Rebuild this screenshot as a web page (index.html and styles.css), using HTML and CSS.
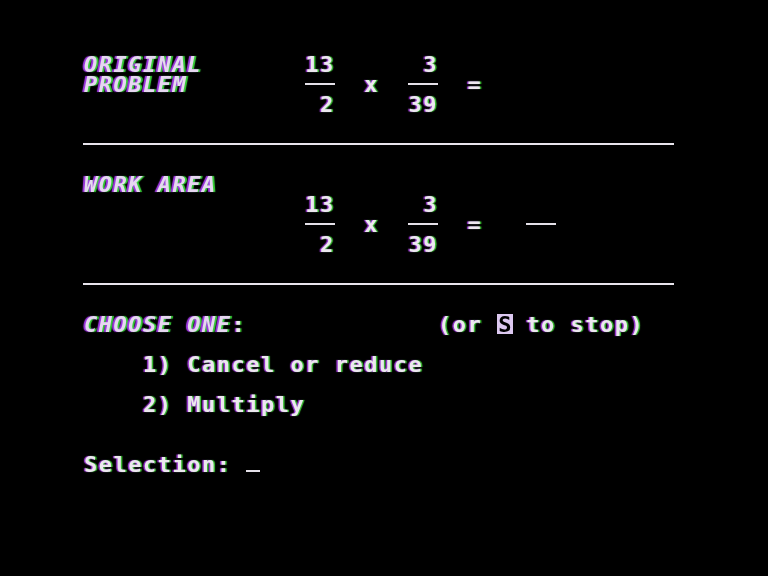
FILE: index.html
```html
<!DOCTYPE html>
<html>
<head>
<meta charset="utf-8">
<link rel="stylesheet" href="styles.css">
</head>
<body>
<main class="screen">
  <div class="row"><span class="head">ORIGINAL</span>       13      3</div>
  <div class="row"><span class="head">PROBLEM</span>        <span class="bar">  </span>  x  <span class="bar">  </span>  =</div>
  <div class="row">                2     39</div>
  <div class="row"></div>
  <div class="rule"></div>
  <div class="row"></div>
  <div class="row"><span class="head">WORK AREA</span></div>
  <div class="row">               13      3</div>
  <div class="row">               <span class="bar">  </span>  x  <span class="bar">  </span>  =   <span class="bar">  </span></div>
  <div class="row">                2     39</div>
  <div class="row"></div>
  <div class="rule"></div>
  <div class="row"></div>
  <div class="row"><span class="head">CHOOSE ONE</span>:             (or <span class="inv">S</span> to stop)</div>
  <div class="row"></div>
  <div class="row">    1) Cancel or reduce</div>
  <div class="row"></div>
  <div class="row">    2) Multiply</div>
  <div class="row"></div>
  <div class="row"></div>
  <div class="row">Selection: <span class="cursor"> </span></div>
</main>
</body>
</html>
```
FILE: styles.css
```css
:root {
  --cw: 14.74px;
  --fg: #ece8ee;
}
html, body {
  margin: 0;
  padding: 0;
  background: #000;
}
body {
  width: 768px;
  height: 576px;
  overflow: hidden;
}
.screen {
  padding: 54px 0 0 84px;
  font-family: "DejaVu Sans Mono", "Liberation Mono", monospace;
  font-weight: bold;
  font-size: 22px;
  letter-spacing: 1.5px;
  color: var(--fg);
  text-shadow: -1.5px 0 1px rgba(176, 64, 240, 0.9), 1.5px 0 1px rgba(70, 220, 60, 0.9);
  filter: blur(0.4px);
}
.row {
  height: 20px;
  line-height: 22px;
  white-space: pre;
}
.head {
  font-style: italic;
  color: #e6d8f0;
  text-shadow: -2px 0 1px rgba(170, 60, 240, 0.95), 2px 0 1px rgba(60, 220, 60, 0.95);
}
.bar {
  display: inline-block;
  height: 20px;
  vertical-align: top;
  background: linear-gradient(to bottom, transparent 9px, #e4e0e8 9px, #e4e0e8 11px, transparent 11px);
}
.cursor {
  display: inline-block;
  height: 20px;
  width: 14px;
  vertical-align: top;
  background: linear-gradient(to bottom, transparent 16px, #e4e0e8 16px, #e4e0e8 18px, transparent 18px);
}
.inv {
  display: inline-block;
  height: 20px;
  width: 16px;
  line-height: 22px;
  letter-spacing: 0;
  text-align: center;
  vertical-align: top;
  margin-right: -1.26px;
  background: #dcc8f0;
  color: #000;
  text-shadow: none;
}
.rule {
  height: 20px;
  width: calc(40 * var(--cw) + 1px);
  margin-left: -1px;
  background: linear-gradient(to bottom, transparent 9px, #e8e4ec 9px, #e8e4ec 11px, transparent 11px);
}
```
